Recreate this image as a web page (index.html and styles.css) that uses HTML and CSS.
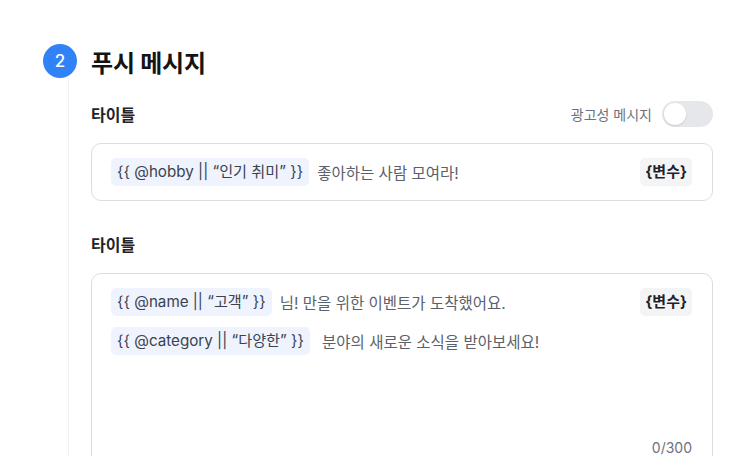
FILE: index.html
```html
<!DOCTYPE html>
<html lang="ko">
<head>
<meta charset="utf-8">
<link rel="stylesheet" href="styles.css">
</head>
<body>
<div class="section">
  <div class="header">
    <div class="step">2</div>
    <h1 class="title">푸시 메시지</h1>
  </div>
  <div class="body">
    <div class="label-row">
      <span class="label">타이틀</span>
      <div class="ad">
        <span class="ad-text">광고성 메시지</span>
        <span class="toggle"><span class="knob"></span></span>
      </div>
    </div>
    <div class="box box-single">
      <div class="lines">
        <div class="line">
          <span class="chip">{{ @hobby || “인기 취미” }}</span>
          <span class="text">좋아하는 사람 모여라!</span>
        </div>
      </div>
      <span class="var">{변수}</span>
    </div>

    <div class="label-row second">
      <span class="label">타이틀</span>
    </div>
    <div class="box box-multi">
      <div class="top">
        <div class="lines">
          <div class="line">
            <span class="chip">{{ @name || “고객” }}</span>
            <span class="text">님! 만을 위한 이벤트가 도착했어요.</span>
          </div>
          <div class="line">
            <span class="chip">{{ @category || “다양한” }}</span>
            <span class="text wide">분야의 새로운 소식을 받아보세요!</span>
          </div>
        </div>
        <span class="var">{변수}</span>
      </div>
      <div class="counter">0/300</div>
    </div>
  </div>
</div>
</body>
</html>
```

FILE: styles.css
```css
* { box-sizing: border-box; }
body {
  margin: 0;
  background: #ffffff;
  font-family: Inter, "Noto Sans CJK KR", sans-serif;
  color: #111827;
}
.section {
  padding: 44px 43px 0 43px;
}
.header {
  display: flex;
  align-items: center;
  gap: 14px;
  height: 34px;
}
.step {
  width: 34px;
  height: 34px;
  border-radius: 50%;
  background: #3182f6;
  color: #ffffff;
  font-size: 17px;
  font-weight: 500;
  display: flex;
  align-items: center;
  justify-content: center;
}
.title {
  margin: 0;
  font-size: 24px;
  font-weight: 700;
  color: #141414;
  letter-spacing: -0.2px;
}
.body {
  margin-left: 25px;
  border-left: 1px solid #f0f1f3;
  padding: 23px 0 0 22px;
  height: 400px;
}
.label-row {
  display: flex;
  align-items: center;
  justify-content: space-between;
  height: 26px;
  margin-bottom: 16px;
}
.label-row.second {
  margin-top: 30px;
}
.label {
  font-size: 16px;
  font-weight: 600;
  color: #1f2329;
}
.ad {
  display: flex;
  align-items: center;
  gap: 10px;
}
.ad-text {
  font-size: 14px;
  color: #6b7280;
}
.toggle {
  width: 51px;
  height: 26px;
  border-radius: 13px;
  background: #e5e7eb;
  padding: 2px;
  display: flex;
}
.knob {
  width: 22px;
  height: 22px;
  border-radius: 50%;
  background: #ffffff;
  box-shadow: 0 1px 2px rgba(0,0,0,0.12);
}
.box {
  border: 1px solid #dadde2;
  border-radius: 10px;
  padding: 14px 20px 14px 19px;
}
.box-single {
  display: flex;
  align-items: flex-start;
  justify-content: space-between;
  height: 58px;
}
.box-multi {
  height: 200px;
  display: flex;
  flex-direction: column;
}
.top {
  display: flex;
  align-items: flex-start;
  justify-content: space-between;
}
.lines {
  display: flex;
  flex-direction: column;
  gap: 11px;
}
.line {
  display: flex;
  align-items: center;
  gap: 8px;
  height: 28px;
}
.chip {
  height: 28px;
  line-height: 28px;
  padding: 0 6px;
  border-radius: 5px;
  background: #eef3fd;
  font-size: 15.2px;
  color: #3a4252;
  white-space: nowrap;
}
.text {
  font-size: 15.5px;
  color: #5b616b;
  white-space: nowrap;
}
.text.wide {
  margin-left: 4px;
}
.var {
  height: 28px;
  line-height: 28px;
  padding: 0 5px;
  border-radius: 5px;
  background: #f3f4f6;
  font-size: 15px;
  font-weight: 700;
  color: #1f2329;
}
.counter {
  margin-top: auto;
  text-align: right;
  font-size: 14px;
  line-height: 20px;
  color: #6b7280;
}
```
